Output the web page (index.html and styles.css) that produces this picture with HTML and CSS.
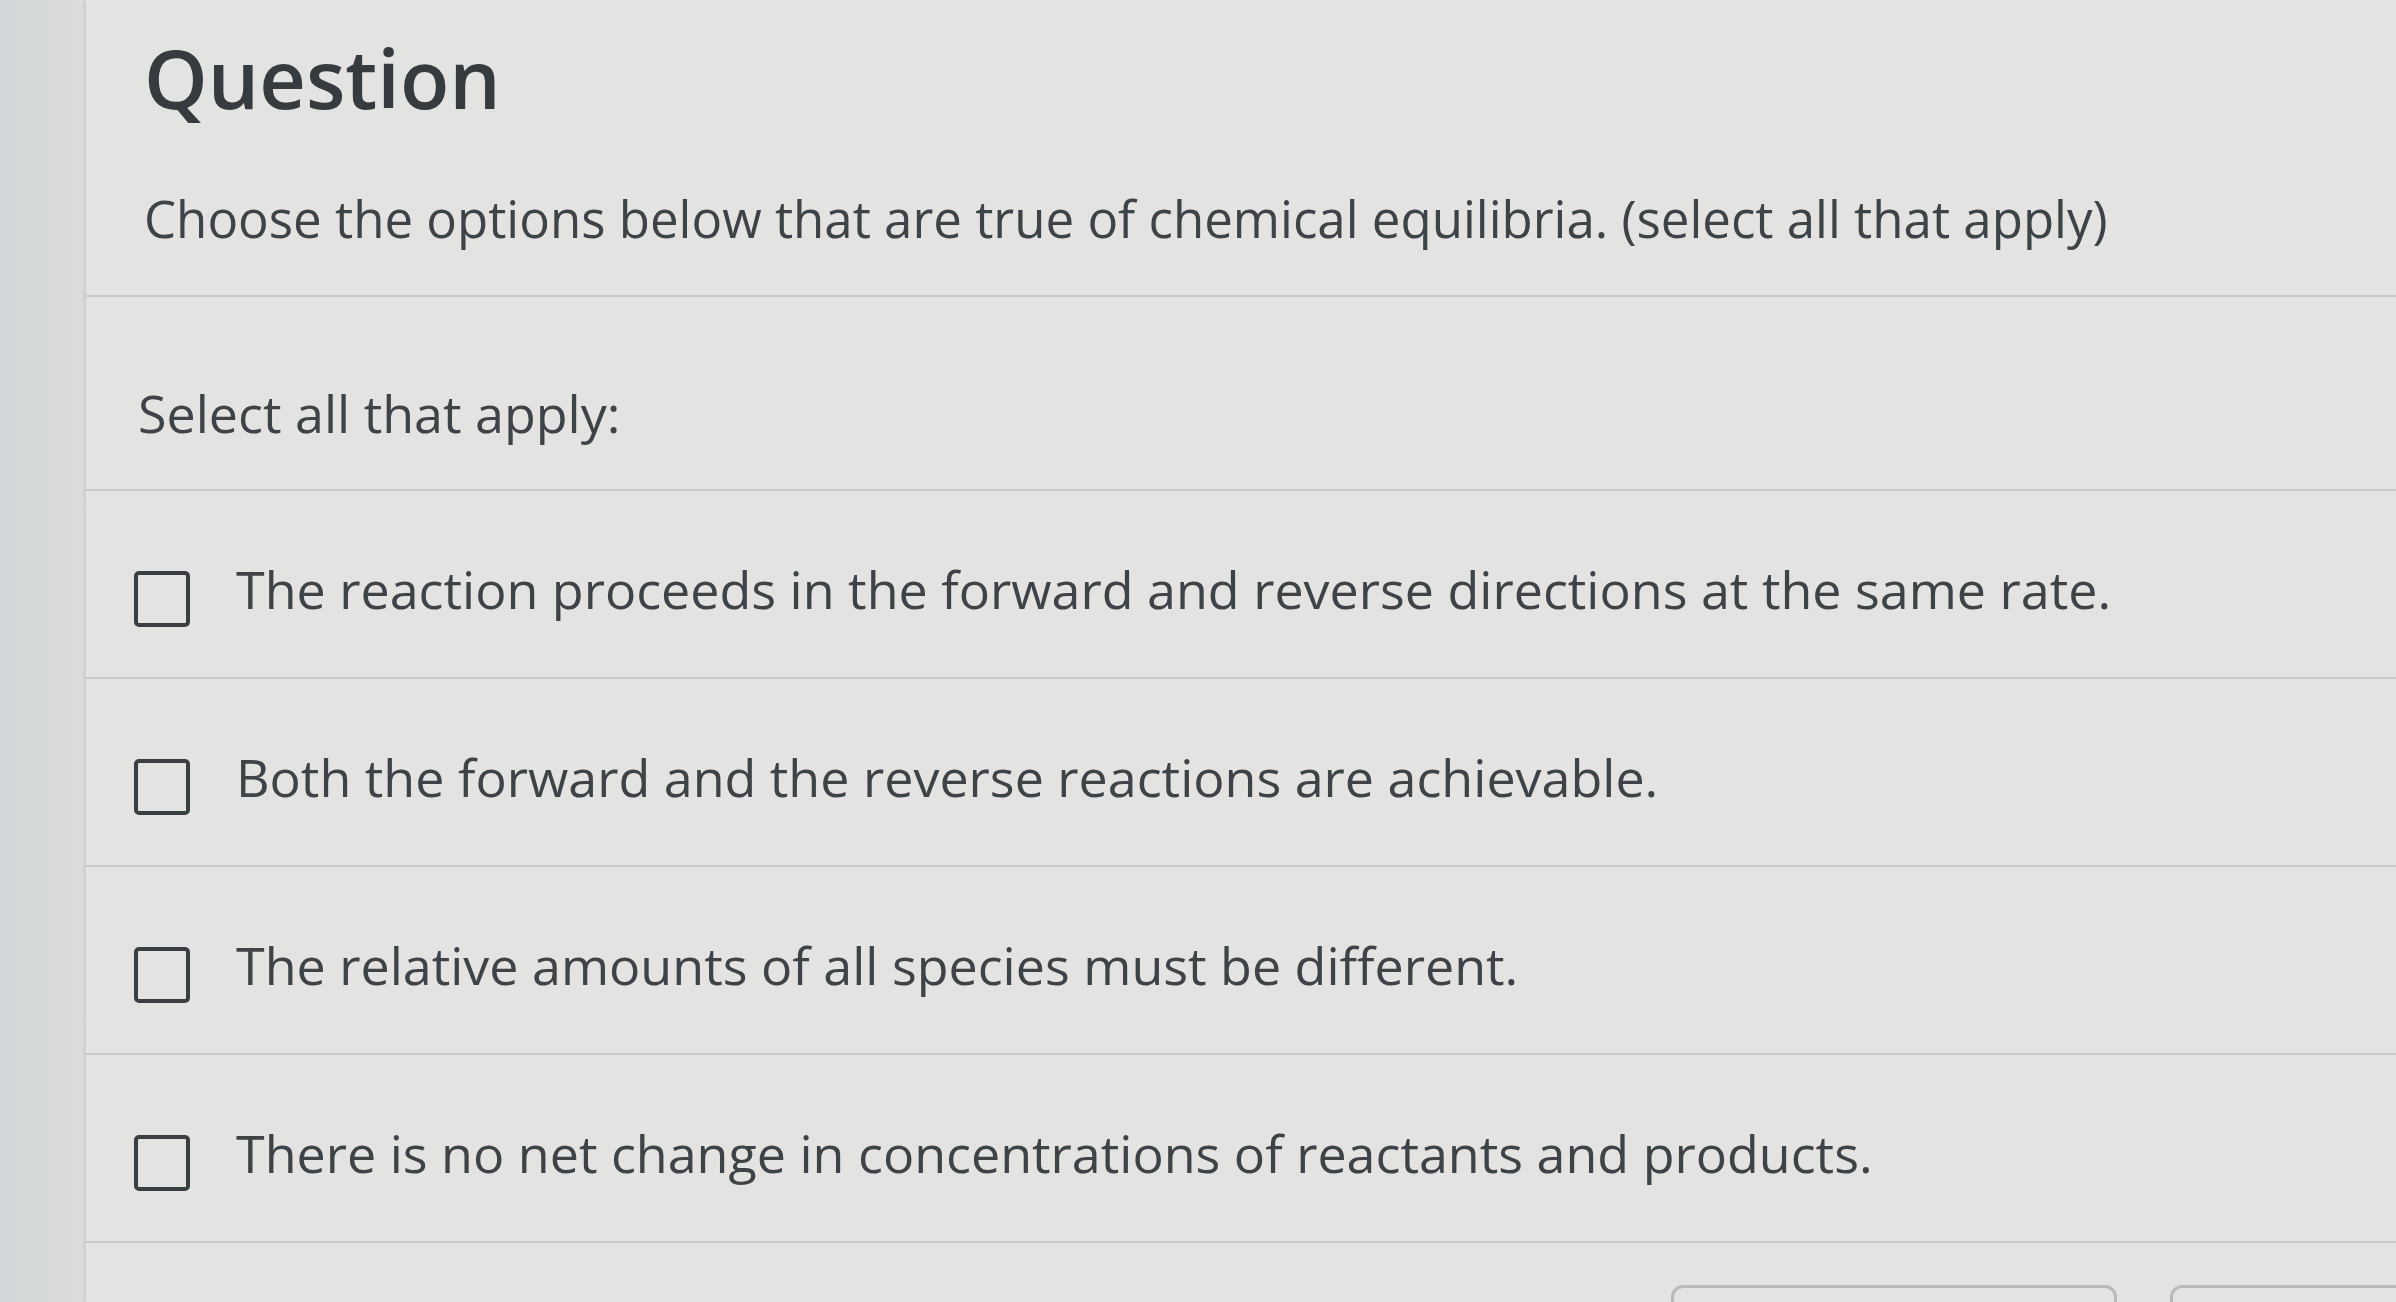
FILE: index.html
```html
<!DOCTYPE html>
<html lang="en">
<head>
<meta charset="utf-8">
<title>Question</title>
<link rel="stylesheet" href="styles.css">
</head>
<body>
<div class="page">
  <aside class="rail"></aside>
  <main class="panel">
    <section class="header">
      <h1 class="title">Question</h1>
      <p class="prompt">Choose the options below that are true of chemical equilibria. (select all that apply)</p>
    </section>
    <section class="instruction">
      <p>Select all that apply:</p>
    </section>
    <ul class="options">
      <li class="option"><span class="box"></span><span class="label">The reaction proceeds in the forward and reverse directions at the same rate.</span></li>
      <li class="option"><span class="box"></span><span class="label">Both the forward and the reverse reactions are achievable.</span></li>
      <li class="option"><span class="box"></span><span class="label">The relative amounts of all species must be different.</span></li>
      <li class="option"><span class="box"></span><span class="label">There is no net change in concentrations of reactants and products.</span></li>
    </ul>
    <footer class="footer">
      <span class="btn btn-wide"></span>
      <span class="btn btn-narrow"></span>
    </footer>
  </main>
</div>
</body>
</html>
```
FILE: styles.css
```css
html, body {
  margin: 0;
  padding: 0;
  height: 100%;
  overflow: hidden;
}
body {
  background: #d7d9da;
  font-family: "Open Sans", "Noto Sans", "Liberation Sans", sans-serif;
  color: #3e4347;
}
.page {
  display: flex;
  height: 1302px;
}
.rail {
  width: 86px;
  flex: none;
  background: linear-gradient(90deg, #d3d6d8 0%, #dadcdd 100%);
}
.panel {
  flex: 1;
  background: #e3e3e1;
  box-shadow: -2px 0 3px rgba(0,0,0,0.08);
  display: flex;
  flex-direction: column;
}
.header {
  padding: 29px 0 47px 58px;
  border-bottom: 2px solid #c9c9c7;
}
.title {
  margin: 0;
  font-size: 81px;
  line-height: 98px;
  font-weight: 600;
  color: #363b3f;
}
.prompt {
  margin: 61px 0 0 0;
  font-size: 51px;
  line-height: 60px;
  font-weight: 400;
}
.instruction {
  padding: 86px 0 46px 52px;
  border-bottom: 2px solid #c9c9c7;
}
.instruction p {
  margin: 0;
  font-size: 52px;
  line-height: 60px;
}
.options {
  list-style: none;
  margin: 0;
  padding: 0;
}
.option {
  display: flex;
  align-items: flex-start;
  gap: 46px;
  padding: 68px 0 50px 48px;
  border-bottom: 2px solid #c9c9c7;
}
.box {
  flex: none;
  width: 48px;
  height: 48px;
  margin-top: 12px;
  border: 4px solid #3a3f43;
  border-radius: 5px;
}
.label {
  font-size: 52px;
  line-height: 60px;
}
.footer {
  display: flex;
  justify-content: flex-end;
  gap: 53px;
  padding-top: 42px;
  margin-right: -60px;
}
.btn {
  display: block;
  height: 70px;
  border: 3px solid #b9b9b7;
  border-radius: 12px;
}
.btn-wide { width: 440px; }
.btn-narrow { width: 280px; }
```
